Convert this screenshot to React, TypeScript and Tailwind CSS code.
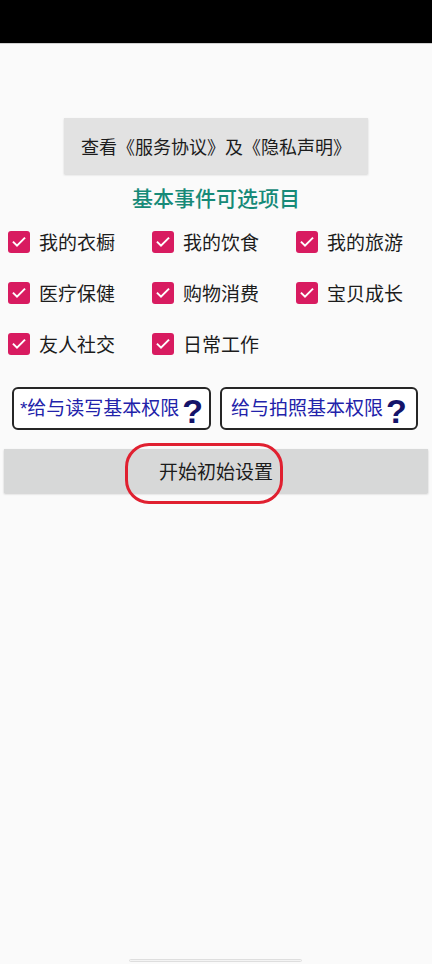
import React from "react";

const items = [
  "我的衣橱",
  "我的饮食",
  "我的旅游",
  "医疗保健",
  "购物消费",
  "宝贝成长",
  "友人社交",
  "日常工作",
];

function Check() {
  return (
    <span className="flex h-[22px] w-[22px] shrink-0 items-center justify-center rounded-[3px] bg-[#d81b60]">
      <svg width="16" height="16" viewBox="0 0 24 24" fill="none">
        <path d="M4 12.5l5 5L20 6.5" stroke="#fff" strokeWidth="3" strokeLinecap="square" />
      </svg>
    </span>
  );
}

function PermButton({ label, width }: { label: string; width: string }) {
  return (
    <div className={`flex h-[43px] ${width} items-center justify-center rounded-[6px] border-2 border-[#262626] bg-white`}>
      <span className="text-[19px] leading-[24px] text-[#2222aa]" style={{ fontFamily: '"Liberation Sans", "Noto Sans CJK SC", sans-serif' }}>
        {label}
      </span>
      <span className="ml-[3px] translate-y-[2px] text-[34px] leading-[30px] font-bold text-[#14146a]" style={{ fontFamily: '"Liberation Sans", sans-serif' }}>
        ?
      </span>
    </div>
  );
}

export default function App() {
  return (
    <div
      className="relative flex h-[964px] w-[432px] flex-col overflow-hidden bg-[#fafafa]"
      style={{ fontFamily: '"Noto Sans CJK SC", "Noto Sans", sans-serif' }}
    >
      <div className="h-[43px] w-full shrink-0 bg-black" />
      <div className="h-px w-full shrink-0 bg-[#cfcfcf]" />

      <div className="mt-[74px] flex justify-center">
        <div className="flex h-[56px] w-[304px] items-center justify-center bg-[#e2e2e2] text-[18px] text-[#1c1c1c] shadow-[0_1px_2px_rgba(0,0,0,0.15)]">
          查看《服务协议》及《隐私声明》
        </div>
      </div>

      <div className="mt-[10px] text-center text-[21px] leading-[26px] font-medium text-[#178a78]">
        基本事件可选项目
      </div>

      <div className="mt-[21px] grid grid-cols-[144px_144px_144px] gap-y-[29px] pl-[8px]">
        {items.map((t) => (
          <div key={t} className="flex h-[22px] items-center gap-[9px]">
            <Check />
            <span className="text-[19px] leading-[22px] text-[#1c1c1c]">{t}</span>
          </div>
        ))}
      </div>

      <div className="mt-[32px] flex gap-[9px] pl-[12px]">
        <PermButton label="*给与读写基本权限" width="w-[199px]" />
        <PermButton label="给与拍照基本权限" width="w-[198px]" />
      </div>

      <div className="relative mx-[4px] mt-[19px] flex h-[44px] items-center justify-center bg-[#d7d8d8] text-[19px] text-[#1c1c1c] shadow-[0_1px_2px_rgba(0,0,0,0.2)]">
        <span>开始初始设置</span>
        <div className="pointer-events-none absolute left-[121px] top-[-6px] h-[61px] w-[158px] rounded-[24px] border-[3px] border-[#e02030]" />
      </div>

      <div className="absolute bottom-[2px] left-[129px] h-[3px] w-[173px] rounded-full border border-[#dedede] bg-[#f4f4f4]" />
    </div>
  );
}
